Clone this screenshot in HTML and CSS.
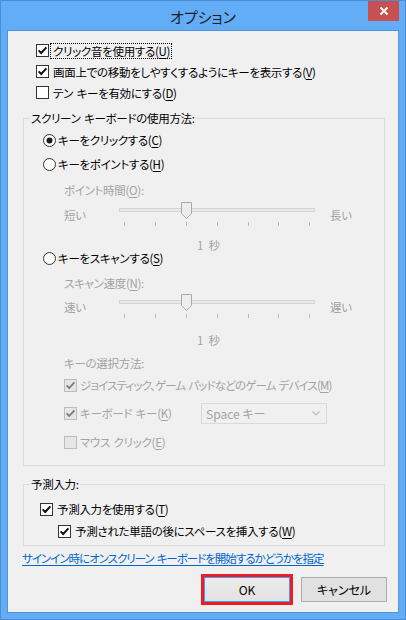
FILE: index.html
```html
<!DOCTYPE html>
<html lang="ja">
<head>
<meta charset="utf-8">
<title>オプション</title>
<link rel="stylesheet" href="styles.css">
</head>
<body>
<div class="window">
  <div class="titlebar">
    <div class="tb-side"></div>
    <div class="title">オプション</div>
    <div class="close"><svg width="10" height="10" viewBox="0 0 10 10"><path d="M1.5 1.5 L8.5 8.5 M8.5 1.5 L1.5 8.5" stroke="#fff" stroke-width="2" fill="none"/></svg></div>
  </div>
  <div class="panel">
    <div class="checks">
      <div class="row cb-row r21">
        <svg class="cbox" width="13" height="13" viewBox="0 0 13 13"><rect x="0.5" y="0.5" width="12" height="12"/><path d="M2.6 6.4 L5.2 9 L10.4 3.4"/></svg>
        <span class="lbl focus">クリック音を使用する(<u>U</u>)</span>
      </div>
      <div class="row cb-row r21">
        <svg class="cbox" width="13" height="13" viewBox="0 0 13 13"><rect x="0.5" y="0.5" width="12" height="12"/><path d="M2.6 6.4 L5.2 9 L10.4 3.4"/></svg>
        <span class="lbl">画面上での移動をしやすくするようにキーを表示する(<u>V</u>)</span>
      </div>
      <div class="row cb-row r21">
        <svg class="cbox" width="13" height="13" viewBox="0 0 13 13"><rect x="0.5" y="0.5" width="12" height="12"/></svg>
        <span class="lbl">テン&#8196;キーを有効にする(<u>D</u>)</span>
      </div>
    </div>

    <fieldset class="group g1">
      <legend>スクリーン&#8196;キーボードの使用方法:</legend>
      <div class="row radio-row h24">
        <svg class="radio" width="13" height="13" viewBox="0 0 13 13"><circle cx="6.5" cy="6.5" r="6"/><circle class="dot" cx="6.5" cy="6.5" r="3"/></svg>
        <span class="rlbl">キーをクリックする(<u>C</u>)</span>
      </div>
      <div class="row radio-row h24">
        <svg class="radio" width="13" height="13" viewBox="0 0 13 13"><circle cx="6.5" cy="6.5" r="6"/></svg>
        <span class="rlbl">キーをポイントする(<u>H</u>)</span>
      </div>
      <div class="row sub dis h20 mt4">ポイント時間(<u>O</u>):</div>
      <div class="slider dis">
        <span class="s-left">短い</span>
        <svg class="track" width="197" height="28" viewBox="0 0 197 28">
          <rect class="rail" x="0.5" y="8.5" width="195" height="3"/>
          <g class="ticks">
            <line x1="5.5" y1="22" x2="5.5" y2="26"/>
            <line x1="36.5" y1="22" x2="36.5" y2="26"/>
            <line x1="67.5" y1="22" x2="67.5" y2="26"/>
            <line x1="98.5" y1="22" x2="98.5" y2="26"/>
            <line x1="129.5" y1="22" x2="129.5" y2="26"/>
            <line x1="159.5" y1="22" x2="159.5" y2="26"/>
            <line x1="190.5" y1="22" x2="190.5" y2="26"/>
          </g>
          <path class="thumb" d="M62.5 2.5 H72.5 V13.5 L67.5 18.5 L62.5 13.5 Z"/>
        </svg>
        <span class="s-right">長い</span>
      </div>
      <div class="row sec dis h14 mt10">1&nbsp;&nbsp;秒</div>
      <div class="row radio-row h12">
        <svg class="radio" width="13" height="13" viewBox="0 0 13 13"><circle cx="6.5" cy="6.5" r="6"/></svg>
        <span class="rlbl">キーをスキャンする(<u>S</u>)</span>
      </div>
      <div class="row sub dis h18 mt10">スキャン速度(<u>N</u>):</div>
      <div class="slider dis">
        <span class="s-left">速い</span>
        <svg class="track" width="197" height="28" viewBox="0 0 197 28">
          <rect class="rail" x="0.5" y="8.5" width="195" height="3"/>
          <g class="ticks">
            <line x1="5.5" y1="22" x2="5.5" y2="26"/>
            <line x1="36.5" y1="22" x2="36.5" y2="26"/>
            <line x1="67.5" y1="22" x2="67.5" y2="26"/>
            <line x1="98.5" y1="22" x2="98.5" y2="26"/>
            <line x1="129.5" y1="22" x2="129.5" y2="26"/>
            <line x1="159.5" y1="22" x2="159.5" y2="26"/>
            <line x1="190.5" y1="22" x2="190.5" y2="26"/>
          </g>
          <path class="thumb" d="M62.5 2.5 H72.5 V13.5 L67.5 18.5 L62.5 13.5 Z"/>
        </svg>
        <span class="s-right">遅い</span>
      </div>
      <div class="row sec dis h14 mt13">1&nbsp;&nbsp;秒</div>
      <div class="row sub dis h20 mt6">キーの選択方法:</div>
      <div class="row sub cb-row dis h24">
        <svg class="cbox off" width="13" height="13" viewBox="0 0 13 13"><rect x="0.5" y="0.5" width="12" height="12"/><path d="M2.6 6.4 L5.2 9 L10.4 3.4"/></svg>
        <span class="dlbl kata">ジョイスティック、ゲーム&#8196;パッドなどのゲーム&#8196;デバイス(<u>M</u>)</span>
      </div>
      <div class="row sub cb-row dis h32">
        <svg class="cbox off" width="13" height="13" viewBox="0 0 13 13"><rect x="0.5" y="0.5" width="12" height="12"/><path d="M2.6 6.4 L5.2 9 L10.4 3.4"/></svg>
        <span class="dlbl kb">キーボード&#8196;キー(<u>K</u>)</span>
        <div class="select">
          <span>Space キー</span>
          <svg width="8" height="5" viewBox="0 0 8 5"><path d="M0.5 0.5 L4 4 L7.5 0.5" fill="none" stroke="#b8b8b8" stroke-width="1.2"/></svg>
        </div>
      </div>
      <div class="row sub cb-row dis h26">
        <svg class="cbox off" width="13" height="13" viewBox="0 0 13 13"><rect x="0.5" y="0.5" width="12" height="12"/></svg>
        <span class="dlbl">マウス&#8196;クリック(<u>E</u>)</span>
      </div>
    </fieldset>

    <fieldset class="group g2">
      <legend>予測入力:</legend>
      <div class="row cb-row h22 ind16">
        <svg class="cbox" width="13" height="13" viewBox="0 0 13 13"><rect x="0.5" y="0.5" width="12" height="12"/><path d="M2.6 6.4 L5.2 9 L10.4 3.4"/></svg>
        <span class="plbl">予測入力を使用する(<u>T</u>)</span>
      </div>
      <div class="row cb-row h22 ind34">
        <svg class="cbox" width="13" height="13" viewBox="0 0 13 13"><rect x="0.5" y="0.5" width="12" height="12"/><path d="M2.6 6.4 L5.2 9 L10.4 3.4"/></svg>
        <span class="plbl">予測された単語の後にスペースを挿入する(<u>W</u>)</span>
      </div>
    </fieldset>

    <div class="linkrow"><a class="link" href="#">サインイン時にオンスクリーン&#8196;キーボードを開始するかどうかを指定</a></div>

    <div class="buttons">
      <button class="btn ok" type="button">OK</button>
      <button class="btn" type="button">キャンセル</button>
    </div>
  </div>
</div>
</body>
</html>
```

FILE: styles.css
```css
* { box-sizing: border-box; }

html, body {
  margin: 0;
  padding: 0;
  background: #62adf6;
}

body {
  font-family: "Noto Sans CJK JP", "Noto Sans", sans-serif;
  font-size: 11.5px;
  letter-spacing: -0.3px;
  font-feature-settings: "palt";
  color: #000;
}

.window {
  width: 406px;
  height: 620px;
  border: 1px solid #4a8fd6;
  background: #62adf6;
  display: flex;
  flex-direction: column;
}

.titlebar {
  height: 29px;
  display: grid;
  grid-template-columns: 1fr auto 1fr;
}

.title {
  align-self: center;
  padding-top: 3px;
  font-size: 15px;
  letter-spacing: 0;
  line-height: 18px;
  color: #1e1e1e;
}

.close {
  justify-self: end;
  align-self: start;
  margin-right: 6px;
  width: 31px;
  height: 20px;
  background: #c75050;
  display: flex;
  align-items: center;
  justify-content: center;
}

.panel {
  margin: 0 6px 6px 6px;
  height: 583px;
  border: 1px solid #4f94dc;
  background: #f0f0f0;
  display: flex;
  flex-direction: column;
}

.checks {
  padding-top: 9px;
}

.row {
  display: flex;
  align-items: center;
  white-space: nowrap;
}

.r21 { height: 21px; }
.h12 { height: 12px; }
.h14 { height: 14px; }
.h18 { height: 18px; }
.h20 { height: 20px; }
.h22 { height: 22px; }
.h24 { height: 24px; }
.h26 { height: 26px; }
.h32 { height: 32px; }
.mt4 { margin-top: 4px; }
.mt6 { margin-top: 6px; }
.mt10 { margin-top: 10px; }
.mt13 { margin-top: 13px; }

.checks .cb-row { margin-left: 28px; }

.cbox { flex: 0 0 auto; display: block; }
.cbox rect { fill: #fff; stroke: #333; }
.cbox path { fill: none; stroke: #111; stroke-width: 2; }
.cbox.off rect { fill: #e6e6e6; stroke: #bcbcbc; }
.cbox.off path { stroke: #7a7a7a; stroke-width: 1.8; }

.lbl {
  margin-left: 1px;
  padding: 0 1px 0 2px;
  line-height: 14px;
  border: 1px dotted transparent;
}
.lbl.focus { border-color: #000; }

u { text-decoration-thickness: 1px; text-underline-offset: 2px; }

.group {
  border: 1px solid #dcdcdc;
  min-width: 0;
  margin: 0 13px 0 15px;
}

.group legend {
  margin-left: 6px;
  padding: 0 1px;
  line-height: 16px;
}

.g1 {
  margin-top: 7px;
  padding: 2px 0 10px 0;
}

.g2 {
  margin-top: 10px;
  padding: 6px 0 3px 0;
}

.radio-row { margin-left: 19px; }
.radio { flex: 0 0 auto; display: block; }
.radio circle { fill: #fff; stroke: #333; }
.radio circle.dot { fill: #1c1c1c; stroke: none; }
.rlbl { margin-left: 2px; }

.dis { color: #a3a3a3; }

.sub { margin-left: 40px; }

.slider {
  margin-left: 40px;
  height: 28px;
  display: flex;
  align-items: flex-start;
}
.s-left {
  width: 55px;
  margin-top: 7px;
  line-height: 16px;
}
.s-right {
  margin-left: 14px;
  margin-top: 7px;
  line-height: 16px;
}
.track { display: block; flex: 0 0 auto; }
.rail { fill: #e7eaea; stroke: #d4d6d6; }
.ticks line { stroke: #b9b9b9; stroke-width: 1; }
.thumb { fill: #ededed; stroke: #aaaaaa; }

.sec { margin-left: 173px; letter-spacing: 0; }

.dlbl { margin-left: 3px; }
.dlbl.kb { width: 121px; }
.dlbl.kata { letter-spacing: -0.85px; }

.select {
  width: 126px;
  height: 21px;
  border: 1px solid #d9d9d9;
  background: #f0f0f0;
  display: flex;
  align-items: center;
  justify-content: space-between;
  padding: 0 6px 0 4px;
  color: #a3a3a3;
  font-size: 12px;
  letter-spacing: 0;
}

.ind16 { margin-left: 16px; }
.ind34 { margin-left: 34px; }
.plbl { margin-left: 4px; }

.linkrow {
  margin: 2px 0 0 14px;
  height: 20px;
  line-height: 20px;
}
.link {
  color: #0066cc;
  letter-spacing: -1px;
  text-decoration: underline;
  text-decoration-thickness: 1px;
  text-underline-offset: 2px;
}

.buttons {
  margin-top: 9px;
  padding-right: 11px;
  display: flex;
  justify-content: flex-end;
  gap: 11px;
}

.btn {
  width: 86px;
  height: 25px;
  font-family: inherit;
  font-size: 12px;
  letter-spacing: 0;
  font-feature-settings: "palt";
  color: #000;
  border: 1px solid #adadad;
  background: #e1e1e1;
  padding: 0;
  margin: 0;
}

.btn.ok {
  border-color: #3c9ff0;
  background: linear-gradient(#ececec, #e2e2e2);
  outline: 3px solid #ee1c25;
  outline-offset: 0;
  border-radius: 0;
}
```
